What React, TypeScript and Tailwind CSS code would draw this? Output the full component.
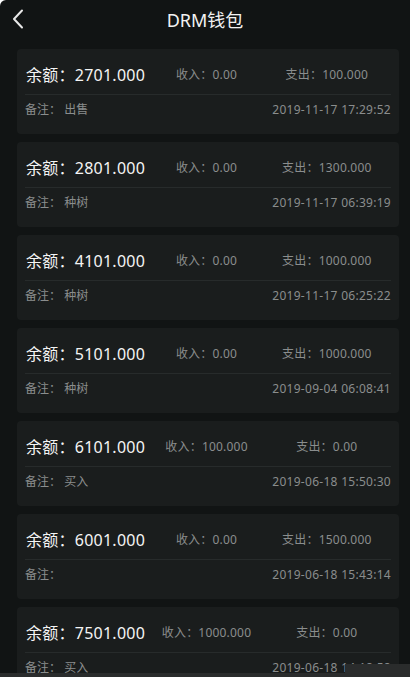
import React from "react";

type Rec = { bal: string; inc: string; out: string; note: string; date: string };

const data: Rec[] = [
  { bal: "2701.000", inc: "0.00", out: "100.000", note: "出售", date: "2019-11-17 17:29:52" },
  { bal: "2801.000", inc: "0.00", out: "1300.000", note: "种树", date: "2019-11-17 06:39:19" },
  { bal: "4101.000", inc: "0.00", out: "1000.000", note: "种树", date: "2019-11-17 06:25:22" },
  { bal: "5101.000", inc: "0.00", out: "1000.000", note: "种树", date: "2019-09-04 06:08:41" },
  { bal: "6101.000", inc: "100.000", out: "0.00", note: "买入", date: "2019-06-18 15:50:30" },
  { bal: "6001.000", inc: "0.00", out: "1500.000", note: "", date: "2019-06-18 15:43:14" },
  { bal: "7501.000", inc: "1000.000", out: "0.00", note: "买入", date: "2019-06-18 14:18:58" },
];

const font = { fontFamily: '"Noto Sans", "Noto Sans CJK SC", sans-serif' };

export default function App() {
  return (
    <div
      className="relative w-[410px] h-[677px] overflow-hidden bg-[#111414] text-white rounded-tl-[6px]"
      style={font}
    >
      <div className="relative h-[40px] flex items-center justify-center">
        <svg
          className="absolute left-[11px] top-[9px]"
          width="14"
          height="20"
          viewBox="0 0 14 20"
          fill="none"
        >
          <path d="M11 1.5 L3 10 L11 18.5" stroke="#e8e8e8" strokeWidth="2" strokeLinecap="round" strokeLinejoin="round" />
        </svg>
        <span className="text-[18px] text-[#f2f2f2] leading-none">DRM钱包</span>
      </div>
      <div className="flex flex-col gap-[8px] pt-[9px] pl-[17px] pr-[11px]">
        {data.map((r, i) => (
          <div key={i} className="bg-[#1a1d1d] rounded-[4px] h-[85px] flex flex-col shrink-0">
            <div className="h-[45px] pt-[7px] pl-[9px] pr-[12px] grid grid-cols-3 items-center">
              <div className="text-[16px] text-[#f4f4f4] whitespace-nowrap tracking-[0.25px]">余额：{r.bal}</div>
              <div className="text-[12px] text-[#8a8d8d] text-center whitespace-nowrap tracking-[0.2px]">收入：{r.inc}</div>
              <div className="text-[12px] text-[#8a8d8d] text-center whitespace-nowrap tracking-[0.2px]">支出：{r.out}</div>
            </div>
            <div className="mx-[8px] h-px bg-[#272b2b]" />
            <div className="h-[30px] flex items-center justify-between pl-[8px] pr-[8px] text-[12px] text-[#8a8d8d]">
              <span>备注：&nbsp;{r.note}</span>
              <span className="tracking-[0.28px]">{r.date}</span>
            </div>
          </div>
        ))}
      </div>
      <div className="absolute left-0 right-0 bottom-0 h-[4px] bg-[#2a2c2c]" />
      <div className="absolute right-0 bottom-0 w-[65px] h-[13px] bg-[#2a2c2c]" />
    </div>
  );
}
